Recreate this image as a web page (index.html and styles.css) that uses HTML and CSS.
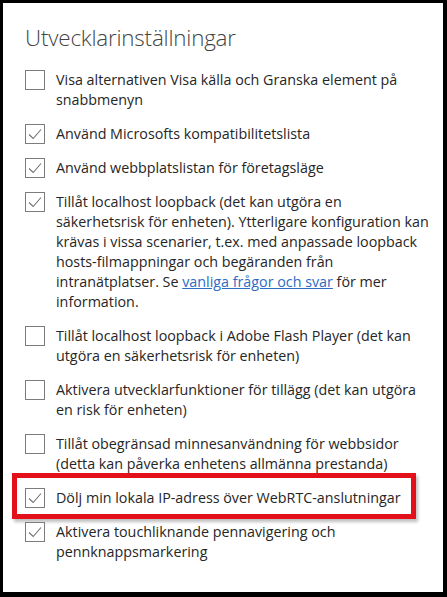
FILE: index.html
```html
<!DOCTYPE html>
<html lang="sv">
<head>
<meta charset="utf-8">
<title>Utvecklarinställningar</title>
<link rel="stylesheet" href="styles.css">
</head>
<body>
<div class="frame">
  <h1 class="title">Utvecklarinställningar</h1>
  <ul class="options">
    <li class="option">
      <span class="box"></span>
      <span class="label">Visa alternativen Visa källa och Granska element på<br>snabbmenyn</span>
    </li>
    <li class="option">
      <span class="box"><svg class="check" viewBox="0 0 18 18"><path d="M3 9.5 L7.2 13.5 L15 4.5"/></svg></span>
      <span class="label">Använd Microsofts kompatibilitetslista</span>
    </li>
    <li class="option">
      <span class="box"><svg class="check" viewBox="0 0 18 18"><path d="M3 9.5 L7.2 13.5 L15 4.5"/></svg></span>
      <span class="label">Använd webbplatslistan för företagsläge</span>
    </li>
    <li class="option">
      <span class="box"><svg class="check" viewBox="0 0 18 18"><path d="M3 9.5 L7.2 13.5 L15 4.5"/></svg></span>
      <span class="label">Tillåt localhost loopback (det kan utgöra en<br>säkerhetsrisk för enheten). Ytterligare konfiguration kan<br>krävas i vissa scenarier, t.ex. med anpassade loopback<br>hosts-filmappningar och begäranden från<br>intranätplatser. Se <a class="link" href="#">vanliga frågor och svar</a> för mer<br>information.</span>
    </li>
    <li class="option">
      <span class="box"></span>
      <span class="label">Tillåt localhost loopback i Adobe Flash Player (det kan<br>utgöra en säkerhetsrisk för enheten)</span>
    </li>
    <li class="option">
      <span class="box"></span>
      <span class="label">Aktivera utvecklarfunktioner för tillägg (det kan utgöra<br>en risk för enheten)</span>
    </li>
    <li class="option">
      <span class="box"></span>
      <span class="label">Tillåt obegränsad minnesanvändning för webbsidor<br>(detta kan påverka enhetens allmänna prestanda)</span>
    </li>
    <li class="option highlighted">
      <span class="box"><svg class="check" viewBox="0 0 18 18"><path d="M3 9.5 L7.2 13.5 L15 4.5"/></svg></span>
      <span class="label">Dölj min lokala IP-adress över WebRTC-anslutningar</span>
    </li>
    <li class="option">
      <span class="box"><svg class="check" viewBox="0 0 18 18"><path d="M3 9.5 L7.2 13.5 L15 4.5"/></svg></span>
      <span class="label">Aktivera touchliknande pennavigering och<br>pennknappsmarkering</span>
    </li>
  </ul>
</div>
</body>
</html>
```

FILE: styles.css
```css
html, body {
  margin: 0;
  padding: 0;
  background: #000;
}

.frame {
  box-sizing: border-box;
  width: 447px;
  height: 597px;
  background: #fff;
  border-style: solid;
  border-color: #000;
  border-width: 3px 4px 5px 3px;
  padding: 20px 0 0 22px;
  font-family: "Open Sans", "Noto Sans", sans-serif;
  color: #2b2b2b;
}

.title {
  margin: 0;
  font-size: 22.4px;
  line-height: 30px;
  font-weight: 300;
  color: #444;
  letter-spacing: -0.2px;
}

.options {
  list-style: none;
  margin: 17px 0 0 0;
  padding: 0;
  display: flex;
  flex-direction: column;
  gap: 14px;
}

.option {
  position: relative;
  display: flex;
  align-items: flex-start;
  gap: 11px;
}

.box {
  box-sizing: border-box;
  flex: none;
  width: 20px;
  height: 20px;
  border: 1px solid #7c7c7c;
  background: #fff;
  display: flex;
}

.check {
  width: 18px;
  height: 18px;
  fill: none;
  stroke: #727272;
  stroke-width: 1.1;
}

.label {
  font-size: 14.3px;
  line-height: 20px;
  white-space: nowrap;
  color: #262626;
}

.link {
  color: #2b6cc4;
  text-decoration: underline;
}

.highlighted::before {
  content: "";
  position: absolute;
  left: -13px;
  top: -15px;
  width: 404px;
  height: 46px;
  box-sizing: border-box;
  border: 5px solid #e3101a;
  box-shadow: 2px 3px 3px rgba(0, 0, 0, 0.25);
  pointer-events: none;
}
```
